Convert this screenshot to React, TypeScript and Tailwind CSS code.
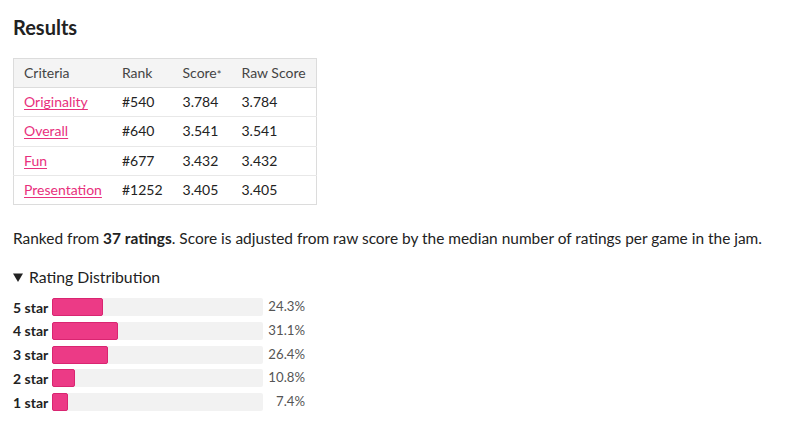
import React from "react";

const rows = [
  { c: "Originality", r: "#540", s: "3.784", raw: "3.784" },
  { c: "Overall", r: "#640", s: "3.541", raw: "3.541" },
  { c: "Fun", r: "#677", s: "3.432", raw: "3.432" },
  { c: "Presentation", r: "#1252", s: "3.405", raw: "3.405" },
];

const dist = [
  { l: "5 star", p: 24.3 },
  { l: "4 star", p: 31.1 },
  { l: "3 star", p: 26.4 },
  { l: "2 star", p: 10.8 },
  { l: "1 star", p: 7.4 },
];

export default function App() {
  return (
    <div
      className="w-[800px] h-[424px] bg-white text-[#222] px-[13px] pt-[13px]"
      style={{ fontFamily: "Lato, 'Open Sans', sans-serif" }}
    >
      <h2 className="text-[20px] font-bold leading-[28px] text-[#222]">Results</h2>
      <table className="mt-[17px] border border-[#dcdcdc] border-collapse text-[14px] leading-[28.2px]">
        <thead>
          <tr className="bg-[#f4f4f4] text-[#444] border-b border-[#dcdcdc]">
            <th className="text-left font-normal pl-[10px] pr-[20px]">Criteria</th>
            <th className="text-left font-normal pl-[10px] pr-[10px]">Rank</th>
            <th className="text-left font-normal pl-[10px] pr-[10px]">
              Score<sup className="text-[11px] relative top-[1px]">*</sup>
            </th>
            <th className="text-left font-normal pl-[10px] pr-[10px]">Raw Score</th>
          </tr>
        </thead>
        <tbody>
          {rows.map((row, i) => (
            <tr key={row.c} className={i < rows.length - 1 ? "border-b border-[#e8e8e8]" : ""}>
              <td className="pl-[10px] pr-[10px]">
                <a className="text-[#e8307d] underline underline-offset-[2px]">{row.c}</a>
              </td>
              <td className="pl-[10px] pr-[10px]">{row.r}</td>
              <td className="pl-[10px] pr-[10px]">{row.s}</td>
              <td className="pl-[10px] pr-[10px]">{row.raw}</td>
            </tr>
          ))}
        </tbody>
      </table>
      <p className="mt-[22px] text-[15.45px] leading-[22px] whitespace-nowrap">
        Ranked from <strong className="font-bold">37 ratings</strong>. Score is adjusted from raw score by the median number of ratings per game in the jam.
      </p>
      <div className="mt-[17px] flex items-center text-[15.8px] leading-[22px]">
        <svg width="10" height="9" viewBox="0 0 10 9" className="mr-[6px]">
          <polygon points="0,0.5 10,0.5 5,9" fill="#222" />
        </svg>
        <span>Rating Distribution</span>
      </div>
      <div className="mt-[10px] flex flex-col gap-[5.75px]">
        {dist.map((d) => (
          <div key={d.l} className="flex items-center h-[18px]">
            <div className="w-[35px] text-[14px] font-bold text-[#222] whitespace-nowrap">{d.l}</div>
            <div className="ml-[4px] w-[211px] h-[18px] bg-[#f2f2f2] rounded-[2px] relative">
              <div
                className="h-full bg-[#ec3a86] border border-[#d92571] rounded-[2px]"
                style={{ width: `${d.p}%` }}
              />
            </div>
            <div className="w-[42px] text-right text-[13.2px] text-[#555]">{d.p}%</div>
          </div>
        ))}
      </div>
    </div>
  );
}
